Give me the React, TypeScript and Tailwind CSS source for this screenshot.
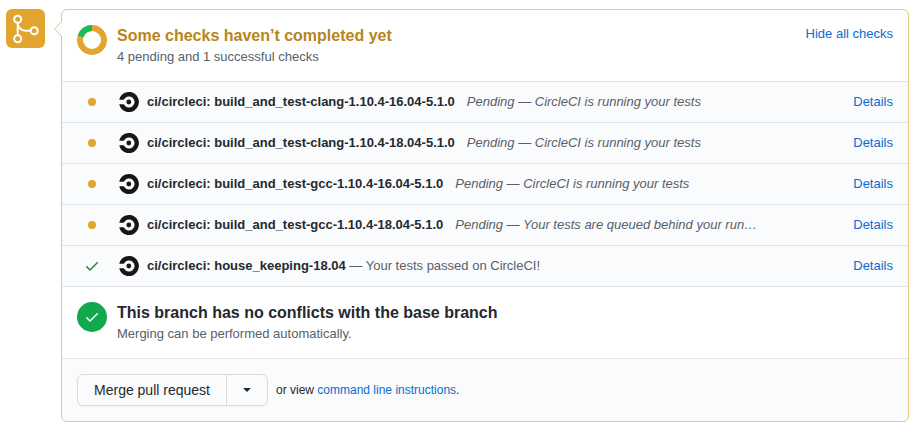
import React from "react";

function CircleLogo() {
  return (
    <svg className="mr-2 size-5 shrink-0" viewBox="0 0 20 20" fill="none">
      <circle cx="9.8" cy="10" r="2.4" fill="#161616" />
      <path
        d="M.3 7.2A10 10 0 1 1 .3 12.8Q.2 12.3 .7 12.3H4.6Q4.9 12.3 5.1 12.7A5.6 5.6 0 1 0 5.1 7.3Q4.9 7.7 4.6 7.7H.7Q.2 7.7 .3 7.2Z"
        fill="#161616"
      />
    </svg>
  );
}

function Check({ className }: { className: string }) {
  return (
    <svg className={className} viewBox="0 0 16 16" fill="currentColor">
      <path fillRule="evenodd" d="M13.78 4.22a.75.75 0 010 1.06l-7.25 7.25a.75.75 0 01-1.06 0L2.22 9.28a.75.75 0 011.06-1.06L6 10.94l6.72-6.72a.75.75 0 011.06 0z" />
    </svg>
  );
}

const checks = [
  { name: "build_and_test-clang-1.10.4-16.04-5.1.0", note: "Pending — CircleCI is running your tests" },
  { name: "build_and_test-clang-1.10.4-18.04-5.1.0", note: "Pending — CircleCI is running your tests" },
  { name: "build_and_test-gcc-1.10.4-16.04-5.1.0", note: "Pending — CircleCI is running your tests" },
  { name: "build_and_test-gcc-1.10.4-18.04-5.1.0", note: "Pending — Your tests are queued behind your run…" },
  { name: "house_keeping-18.04", note: "— Your tests passed on CircleCI!", passed: true },
];

export default function App() {
  return (
    <div className="flex h-[427px] w-[913px] items-start bg-white pt-[9px] pl-1.5 font-['Liberation_Sans',Arial,sans-serif] text-[13px] leading-5 text-[#24292e]">
      <div className="size-[39px] shrink-0 rounded-md bg-[#e1a530]">
        <svg viewBox="0 0 39 39" fill="none" stroke="white" strokeWidth="2">
          <circle cx="11.7" cy="10.3" r="3.5" />
          <circle cx="11.7" cy="29.8" r="3.5" />
          <circle cx="28.2" cy="21.7" r="3.5" />
          <path d="M11.7 14v12.2M11.7 14c0 4.6 3.4 7.7 8 7.7h4.9" />
        </svg>
      </div>
      <div className="relative ml-4 h-[413px] w-[848px] shrink-0 rounded-md border border-[#e6c77f]">
        <svg className="absolute top-[11px] -left-[8px] h-4 w-2" viewBox="0 0 8 16">
          <path d="M8 0L0.7 8L8 16" fill="#fafbfc" stroke="#e6c77f" />
        </svg>
        <div className="flex h-[71px] pt-[15px] pr-[15px] pl-[15px]">
          <svg className="size-[30px] shrink-0" viewBox="0 0 30 30" fill="none" strokeWidth="6">
            <circle cx="15" cy="15" r="12" stroke="#e1a530" />
            <path d="M3.6 11.3A12 12 0 0 1 15 3" stroke="#13bd5b" />
          </svg>
          <div className="mt-px ml-2.5 flex-1">
            <h3 className="text-base leading-5 font-bold text-[#b88520]">Some checks haven’t completed yet</h3>
            <p className="mt-px text-[#586069]">4 pending and 1 successful checks</p>
          </div>
          <a className="-mt-1.5 h-5 pt-[5px] text-[#0b6bd0]">Hide all checks</a>
        </div>
        <div className="bg-[#fafbfc]">
          {checks.map((c) => (
            <div key={c.name} className="flex h-[41px] items-center border-t border-[#e1e4e8] pr-[15px] pl-[15px]">
              <div className="mr-3 flex w-[30px] shrink-0 justify-center">
                {c.passed ? <Check className="size-4 text-[#22863a]" /> : <span className="size-2 rounded-full bg-[#e1a530]" />}
              </div>
              <CircleLogo />
              <strong className="whitespace-nowrap">ci/circleci: {c.name}</strong>
              <span className={c.passed ? "ml-[3.6px] flex-1 whitespace-nowrap text-[#586069]" : "ml-3 flex-1 whitespace-nowrap text-[#586069] italic"}>{c.note}</span>
              <a className="text-[#0b6bd0]">Details</a>
            </div>
          ))}
        </div>
        <div className="flex h-[72px] border-t border-[#e1e4e8] pt-[15px] pl-[15px]">
          <div className="flex size-[30px] shrink-0 items-center justify-center rounded-full bg-[#11a84e]">
            <Check className="size-4 text-white" />
          </div>
          <div className="mt-px ml-2.5">
            <h3 className="text-base leading-5 font-bold">This branch has no conflicts with the base branch</h3>
            <p className="mt-px text-[#586069]">Merging can be performed automatically.</p>
          </div>
        </div>
        <div className="flex h-[63px] items-center rounded-b-md border-t border-[#e1e4e8] bg-[#fafbfc] pl-[15px]">
          <div className="flex h-8 w-[191px] rounded-md border border-[#d9dbdd] bg-[#fafbfc] shadow-[0_1px_0_rgba(27,31,35,0.04)]">
            <button className="w-[149px] border-r border-[#d9dbdd] text-sm">Merge pull request</button>
            <button className="flex flex-1 items-center justify-center">
              <span className="border-x-4 border-t-4 border-x-transparent border-t-[#24292e]" />
            </button>
          </div>
          <p className="ml-2 text-xs">
            or view <a className="text-[#0b6bd0]">command line instructions</a>.
          </p>
        </div>
      </div>
    </div>
  );
}
